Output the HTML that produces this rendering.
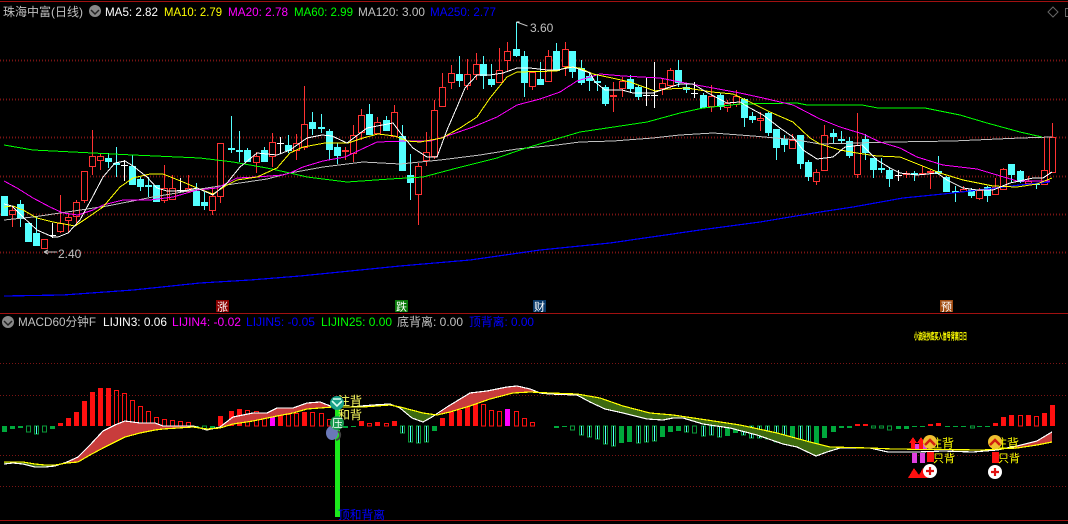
<!DOCTYPE html>
<html><head><meta charset="utf-8"><title>珠海中富</title>
<style>html,body{margin:0;padding:0;background:#000;width:1068px;height:524px;overflow:hidden}svg{display:block}text{font-family:"Liberation Sans","Noto Sans CJK SC",sans-serif;font-size:12px}</style></head>
<body>
<svg width="1068" height="524" viewBox="0 0 1068 524" xmlns="http://www.w3.org/2000/svg">
<rect width="1068" height="524" fill="#000"/>
<g shape-rendering="crispEdges">
<path d="M0 1.5H1068M0 313.5H1068M0 520.5H1068" stroke="#a01010" stroke-width="1" fill="none"/>
<path d="M0 60.5H1068M0 99.5H1068M0 137.5H1068M0 176.5H1068M0 214.5H1068M0 252.5H1068" stroke="#3a0a0a" stroke-width="3" stroke-dasharray="1 2" fill="none"/>
<path d="M0 60.5H1068M0 99.5H1068M0 137.5H1068M0 176.5H1068M0 214.5H1068M0 252.5H1068M0 363.5H1068M0 395.5H1068M0 455.5H1068M0 486.5H1068" stroke="#7a1414" stroke-width="1" stroke-dasharray="1 2" fill="none"/>
<!-- cyan wicks -->
<path fill="none" stroke="#54ffff" d="M20.5 200V227M36.5 217V246M108.5 153V168M116.5 147V177M132.5 155V185M140.5 177V191M148.5 177V197M196.5 183V206M204.5 192V210M231.5 116V153M239.5 131V162M247.5 148V162M264.5 147V162M288.5 135V153M312.5 112V135M321.5 114V133M329.5 129V160M337.5 143V164M369.5 104V135M386.5 116V131M402.5 125V171M410.5 154V200M459.5 56V87M483.5 56V89M491.5 64V87M516.5 22V57M524.5 51V97M540.5 62V85M556.5 43V71M572.5 51V78M581.5 60V85M589.5 72V91M597.5 74V91M605.5 85V106M630.5 75V93M638.5 85V100M678.5 60V87M686.5 83V93M703.5 93V108M720.5 93V110M744.5 98V127M752.5 112V123M768.5 112V136M776.5 129V160M784.5 135V152M800.5 135V169M808.5 160V181M833.5 129V143M841.5 131V143M849.5 137V158M865.5 134V160M873.5 158V178M881.5 158V173M889.5 167V187M914.5 171V181M938.5 156V174M946.5 176V192M955.5 186V202M971.5 188V198M987.5 186V202M1011.5 164V183M1020.5 170V183M1036.5 183V189"/>
<!-- red wicks -->
<path fill="none" stroke="#ff3232" d="M12.5 206V227M60.5 195V233M68.5 213V232M76.5 200V224M84.5 171V203M92.5 130V175M100.5 153V170M164.5 165V203M172.5 175V200M188.5 175V192M212.5 187V215M220.5 143V203M256.5 152V173M272.5 133V167M296.5 134V160M304.5 86V150M345.5 147V160M353.5 125V162M361.5 109V140M377.5 117V134M394.5 105V137M418.5 163V225M426.5 132V166M434.5 100V159M442.5 73V107M451.5 65V89M467.5 59V90M476.5 53V80M499.5 48V83M507.5 42V72M532.5 72V90M548.5 50V82M565.5 42V76M613.5 82V112M622.5 77V97M662.5 79V95M670.5 68V88M711.5 85V112M727.5 100V112M736.5 90V107M760.5 112V131M792.5 134V149M816.5 169V185M824.5 125V171M857.5 113V178M906.5 171V178M922.5 166V175M930.5 170V189M963.5 186V192M979.5 188V200M995.5 178V195M1003.5 168V190M1028.5 176V184M1044.5 137V185M1052.5 123V173"/>
<!-- red bodies -->
<path fill="#000" stroke="#ff3232" d="M9.5 210.5h6v4h-6zM41.5 239.5h6v9h-6zM57.5 223.5h6v8h-6zM65.5 217.5h6v3h-6zM73.5 202.5h6v14h-6zM81.5 171.5h6v29h-6zM89.5 156.5h6v10h-6zM97.5 156.5h6v4h-6zM161.5 188.5h6v12h-6zM169.5 188.5h6v11h-6zM185.5 188.5h6v3h-6zM209.5 196.5h6v14h-6zM217.5 143.5h6v53h-6zM253.5 156.5h6v6h-6zM269.5 142.5h6v14h-6zM293.5 143.5h6v7h-6zM301.5 124.5h6v23h-6zM342.5 150.5h6v1h-6zM350.5 135.5h6v18h-6zM358.5 115.5h6v17h-6zM374.5 122.5h6v11h-6zM391.5 112.5h6v24h-6zM415.5 166.5h6v28h-6zM423.5 152.5h6v8h-6zM431.5 110.5h6v46h-6zM439.5 87.5h6v19h-6zM448.5 73.5h6v9h-6zM464.5 74.5h6v11h-6zM473.5 64.5h6v10h-6zM496.5 70.5h6v12h-6zM504.5 51.5h6v9h-6zM529.5 72.5h6v14h-6zM545.5 56.5h6v25h-6zM562.5 49.5h6v17h-6zM610.5 95.5h6v1h-6zM619.5 81.5h6v7h-6zM659.5 83.5h6v5h-6zM667.5 70.5h6v15h-6zM708.5 96.5h6v10h-6zM724.5 103.5h6v4h-6zM733.5 96.5h6v8h-6zM757.5 118.5h6v2h-6zM789.5 140.5h6v8h-6zM813.5 172.5h6v9h-6zM821.5 135.5h6v35h-6zM854.5 145.5h6v29h-6zM903.5 173.5h6v1h-6zM919.5 173.5h6v1h-6zM927.5 171.5h6v1h-6zM960.5 189.5h6v2h-6zM976.5 190.5h6v8h-6zM992.5 187.5h6v7h-6zM1000.5 169.5h6v20h-6zM1025.5 181.5h6v2h-6zM1041.5 170.5h6v14h-6zM1049.5 137.5h6v35h-6z"/>
<!-- cyan bodies -->
<path fill="#54ffff" d="M1 196h7v20h-7zM17 204h7v15h-7zM25 223h7v19h-7zM33 233h7v13h-7zM105 158h7v4h-7zM113 163h7v2h-7zM129 166h7v19h-7zM137 179h7v8h-7zM145 185h7v2h-7zM153 185h7v17h-7zM193 191h7v15h-7zM201 202h7v4h-7zM228 148h7v2h-7zM236 150h7v2h-7zM244 150h7v12h-7zM261 150h7v12h-7zM285 145h7v6h-7zM309 122h7v7h-7zM318 127h7v2h-7zM326 131h7v19h-7zM334 147h7v9h-7zM366 114h7v21h-7zM383 120h7v11h-7zM399 136h7v35h-7zM407 175h7v8h-7zM456 74h7v7h-7zM480 64h7v12h-7zM488 79h7v6h-7zM513 49h7v7h-7zM521 56h7v27h-7zM537 79h7v6h-7zM553 51h7v20h-7zM569 51h7v21h-7zM578 68h7v15h-7zM586 76h7v5h-7zM594 81h7v2h-7zM602 87h7v17h-7zM627 79h7v10h-7zM635 87h7v10h-7zM675 70h7v13h-7zM683 87h7v3h-7zM700 95h7v13h-7zM717 95h7v12h-7zM741 99h7v19h-7zM749 116h7v4h-7zM765 113h7v20h-7zM773 129h7v19h-7zM781 139h7v6h-7zM797 135h7v29h-7zM805 162h7v15h-7zM830 133h7v4h-7zM838 139h7v2h-7zM846 141h7v15h-7zM862 139h7v14h-7zM870 158h7v12h-7zM878 168h7v2h-7zM886 170h7v9h-7zM911 173h7v2h-7zM935 171h7v3h-7zM943 177h7v15h-7zM952 191h7v2h-7zM968 190h7v6h-7zM984 187h7v9h-7zM1008 164h7v11h-7zM1017 171h7v11h-7zM1033 184h7v1h-7z"/>
<!-- white crosses -->
<path fill="none" stroke="#fff" d="M52.5 223V238M49 235.5h7M124.5 160V181M121 165.5h7M180.5 178V193M177 190.5h7M280.5 137V153M277 143.5h7M646.5 78V106M643 95.5h7M654.5 62V108M651 95.5h7M694.5 82V98M691 93.5h7M898.5 170V181M895 175.5h7"/>
<!-- MA lines -->
<g fill="none">
<polyline stroke="#0000ff" stroke-width="1.2" points="4,296 63,295 133,290 200,283 250,280 300,276 400,266 470,260 540,250 610,243 700,230 760,222 820,212 853,207 903,198 953,193 987,189 1020,185 1050,182"/>
<polyline stroke="#c0c0c0" stroke-width="1" points="4,220 33,217 67,212 107,206 153,197 200,189 233,184 267,179 290,173 323,167 363,162 400,164 440,160 480,155 517,149 557,145 580,142 613,141 653,138 680,135 713,133 753,136 797,140 820,144 893,142 953,141 1020,138 1052,137"/>
<polyline stroke="#00ff00" stroke-width="1" points="4,145 33,150 73,152 133,155 200,158 233,162 267,168 290,173 307,177 347,182 390,179 423,177 457,168 497,158 523,149 563,137 580,132 607,128 647,122 680,113 703,108 740,104 797,103 807,105 862,105 878,108 925,108 960,115 987,123 1020,132 1042,137"/>
<polyline stroke="#ff00ff" stroke-width="1" points="4,181 17,188 33,198 50,207 63,213 78,215 93,210 103,205 123,200 150,200 173,197 197,190 217,188 237,178 257,177 283,175 290,173 303,167 323,161 345,157 377,142 407,141 430,141 447,136 473,127 497,117 517,105 540,99 560,92 577,81 600,74 623,76 660,78 680,82 713,88 740,93 763,98 793,105 820,119 840,127 863,134 880,142 900,148 917,157 943,165 977,169 997,175 1017,181 1050,181"/>
<polyline stroke="#ffff00" stroke-width="1" points="4,207 13,206 23,210 37,218 53,222 75,226 87,218 103,207 120,187 133,178 150,174 163,174 183,182 197,188 213,194 227,185 237,180 257,177 277,168 290,153 303,147 325,143 348,143 363,138 378,134 395,136 407,141 420,142 442,138 460,128 477,117 490,98 507,77 517,72 557,71 567,67 580,68 593,74 612,78 630,82 655,91 667,89 687,88 712,92 733,94 750,102 770,112 793,122 810,138 820,144 840,150 857,153 877,156 900,157 920,165 940,173 963,180 993,186 1017,187 1037,184 1052,178"/>
<polyline stroke="#ffffff" stroke-width="1" points="4,204 12,206 23,217 37,230 53,237 58,237 68,233 80,220 92,198 103,177 115,163 125,161 133,166 147,177 157,188 167,191 183,191 197,188 213,195 227,183 240,167 257,153 277,155 290,150 307,138 322,135 332,136 347,143 367,128 393,123 402,135 413,148 427,157 437,157 447,130 457,107 465,88 477,75 490,75 503,73 517,68 530,68 547,70 557,70 573,67 590,73 595,82 605,90 622,90 633,93 653,93 667,88 680,84 693,84 708,93 727,103 740,102 750,108 763,115 780,128 793,137 803,150 817,159 833,157 845,147 862,145 877,160 890,168 900,173 917,175 937,173 947,180 963,188 977,190 993,190 1010,183 1033,178 1043,178 1052,172"/>
</g>
<!-- MACD histogram -->
<path fill="#ff1010" d="M58 423h5v3h-5zM66 418h5v8h-5zM74 412h5v14h-5zM82 401h5v25h-5zM90 392h5v34h-5zM98 388h5v38h-5zM106 388h5v38h-5zM218 416h5v10h-5zM229 411h5v15h-5zM237 409h5v17h-5zM278 415h5v11h-5zM302 412h5v14h-5zM359 421h5v5h-5zM375 422h5v4h-5zM392 421h5v5h-5zM440 418h5v8h-5zM449 412h5v14h-5zM457 410h5v16h-5zM465 406h5v20h-5zM473 404h5v22h-5zM855 424h5v2h-5zM863 424h5v2h-5zM928 424h5v2h-5zM936 423h5v3h-5zM993 423h5v3h-5zM1001 417h5v9h-5zM1009 415h5v11h-5zM1026 415h5v11h-5zM1042 413h5v13h-5zM1050 405h5v21h-5z"/>
<path fill="none" stroke="#ff1010" d="M114.500 390.500h4V426h-4zM122.500 393.500h4V426h-4zM130.500 400.500h4V426h-4zM138.500 406.500h4V426h-4zM146.500 411.500h4V426h-4zM154.500 417.500h4V426h-4zM162.500 419.500h4V426h-4zM170.500 420.500h4V426h-4zM178.500 421.500h4V426h-4zM186.500 422.500h4V426h-4zM245.500 410.500h4V426h-4zM254.500 411.500h4V426h-4zM262.500 417.500h4V426h-4zM286.500 414.500h4V426h-4zM294.500 413.500h4V426h-4zM310.500 412.500h4V426h-4zM319.500 413.500h4V426h-4zM327.500 419.500h4V426h-4zM367.500 423.500h4V426h-4zM384.500 423.500h4V426h-4zM481.500 404.500h4V426h-4zM489.500 410.500h4V426h-4zM497.500 411.500h4V426h-4zM514.500 411.500h4V426h-4zM522.500 418.500h4V426h-4zM530.500 422.500h4V426h-4zM1018.500 415.500h4V426h-4zM1034.500 416.500h4V426h-4z"/>
<path fill="#ff00ff" d="M270 411h5v15h-5zM505 409h5v17h-5z"/>
<path fill="#00a83c" d="M2 426h5v6h-5zM10 426h5v3h-5zM18 426h5v2h-5zM50 426h5v3h-5zM194 426h5v1h-5zM210 426h5v2h-5zM343 426h5v2h-5zM351 426h5v1h-5zM432 426h5v5h-5zM554 426h5v2h-5zM562 426h5v1h-5zM619 426h5v17h-5zM627 426h5v16h-5zM660 426h5v11h-5zM668 426h5v6h-5zM676 426h5v5h-5zM725 426h5v10h-5zM733 426h5v7h-5zM790 426h5v14h-5zM814 426h5v20h-5zM822 426h5v12h-5zM831 426h5v6h-5zM839 426h5v2h-5zM847 426h5v2h-5zM896 426h5v3h-5zM904 426h5v3h-5zM912 426h5v1h-5zM920 426h5v1h-5zM945 426h5v1h-5zM953 426h5v1h-5zM961 426h5v1h-5zM977 426h5v1h-5zM985 426h5v1h-5z"/>
<path fill="none" stroke="#0a9a3a" d="M26.500 426v6h4v-6zM34.500 426v8h4v-8zM42.500 426v6h4v-6zM202.500 426v3h4v-3zM400.500 426v7h4v-7zM408.500 426v16h4v-16zM416.500 426v17h4v-17zM424.500 426v16h4v-16zM570.500 426v4h4v-4zM579.500 426v9h4v-9zM587.500 426v11h4v-11zM595.500 426v13h4v-13zM603.500 426v18h4v-18zM611.500 426v20h4v-20zM636.500 426v17h4v-17zM644.500 426v16h4v-16zM652.500 426v15h4v-15zM684.500 426v6h4v-6zM692.500 426v7h4v-7zM701.500 426v10h4v-10zM709.500 426v9h4v-9zM717.500 426v11h4v-11zM741.500 426v9h4v-9zM749.500 426v12h4v-12zM757.500 426v12h4v-12zM765.500 426v13h4v-13zM774.500 426v16h4v-16zM782.500 426v17h4v-17zM798.500 426v17h4v-17zM806.500 426v19h4v-19zM871.500 426v2h4v-2zM879.500 426v2h4v-2zM887.500 426v4h4v-4zM970.500 426v2h4v-2z"/>
<path fill="none" stroke="#54ffff" d="M36.500 426v8M402.500 426v7M410.500 426v16M418.500 426v17M426.500 426v16M581.500 426v9M589.500 426v11M597.500 426v13M605.500 426v18M613.500 426v20M638.500 426v17M646.500 426v16M654.500 426v15M686.500 426v6M703.500 426v10M711.500 426v9M719.500 426v11M743.500 426v9M751.500 426v12M759.500 426v12M767.500 426v13M776.500 426v16M784.500 426v17M800.500 426v17M808.500 426v19"/>
</g>
<!-- MACD fills -->
<g shape-rendering="crispEdges">
<polygon fill="#c83c3c" points="55,466 67,462 78,457 90,445 103,431 115,425 125,421 140,423 155,423 163,426 193,426 193,427 163,429 155,430 140,433 125,437 115,442 103,448 90,455 78,462 67,463"/>
<polygon fill="#c83c3c" points="220,427 233,417 253,413 267,413 277,408 293,408 307,403 320,402 333,407 350,407 373,405 390,404 390,405 363,407 333,407 307,409 290,413 277,416 253,421 233,424"/>
<polygon fill="#c83c3c" points="437,415 447,407 470,393 487,391 507,387 517,386 530,389 540,393 530,392 513,393 490,399 470,406 450,412"/>
<polygon fill="#c83c3c" points="997,449 1017,446 1037,441 1052,432 1052,442 1037,445 1017,448"/>
<polygon fill="#3e6a10" points="400,407 412,418 423,422 432,417 437,415 423,413"/>
<polygon fill="#3e6a10" points="577,394 600,398 623,406 650,413 673,415 707,420 740,425 777,433 810,442 830,447 840,448 827,452 816,456 797,447 783,444 757,435 730,428 703,424 683,418 673,418 663,420 647,419 623,413 605,409 590,402 577,395"/>
<polygon fill="#3e6a10" points="4,462 23,462 35,464 45,465 55,466 45,467 35,467 23,464 13,463 4,464"/>
<polygon fill="#3e6a10" points="193,426 207,430 220,427 220,428 207,429"/>
<polyline fill="none" stroke="#ffffff" stroke-width="1.2" points="4,464 13,463 23,464 35,467 45,467 55,466 67,462 78,457 90,445 103,431 115,425 125,421 140,423 155,423 163,426 193,426 207,430 220,427 233,417 253,413 267,413 277,408 293,408 307,403 320,402 333,407 350,407 373,405 390,404 400,408 412,418 423,422 432,417 447,407 470,393 487,391 507,387 517,386 530,389 540,393 550,394 577,395 590,402 605,409 623,413 647,419 663,420 673,418 683,418 703,424 730,428 757,435 783,444 797,447 816,456 827,452 840,448 870,448 888,452 917,452 943,451 973,452 997,450 1017,446 1037,441 1052,432"/>
<polyline fill="none" stroke="#ffff00" stroke-width="1.2" points="4,462 23,462 35,464 45,465 55,465 67,463 78,462 90,455 103,448 115,442 125,437 140,433 155,430 163,429 193,427 207,429 220,428 233,424 253,421 277,416 293,413 307,409 333,407 363,407 390,405 400,407 423,413 437,415 450,412 470,406 490,399 513,393 530,392 550,393 577,394 600,398 623,406 650,413 673,415 707,420 740,425 777,433 810,442 830,447 870,448 893,449 983,450 997,449 1017,448 1037,445 1052,442"/>
<rect x="335" y="408" width="5" height="9" fill="#1ce81c"/>
<rect x="335" y="430" width="5" height="87" fill="#1ce81c"/>
<!-- right icons bars -->
<path fill="#e040e0" d="M912 453h5v10h-5zM920 453h5v10h-5zM915 444h4v5h-4zM923 444h4v5h-4z"/>
<path fill="#ff1010" d="M927 452h7v10h-7zM992 452h7v11h-7z"/>
<path fill="#ff1010" d="M913 437l4 6h-2v6h-4v-6h-2zM921 437l4 6h-2v6h-4v-6h-2zM908 478l6-10 5 7 4-7 5 10z"/>
</g>
<!-- marker text sits under the icons -->
<text x="338" y="405" fill="#ffff60" style="font-size:12px">注背</text>
<text x="338" y="419" fill="#ffff60" style="font-size:12px">和背</text>
<text x="930" y="447.500" fill="#ffff00" style="font-size:12px">注背</text>
<text x="933" y="462" fill="#ffff00" style="font-size:11px">只背</text>
<text x="995" y="447.500" fill="#ffff00" style="font-size:12px">注背</text>
<text x="998" y="462" fill="#ffff00" style="font-size:11px">只背</text>
<!-- left-center icons -->
<ellipse cx="332" cy="433" rx="6" ry="7" fill="#6a78b8"/>
<path d="M338 431a5 5 0 0 1 -2 9" fill="none" stroke="#444" stroke-width="2"/>
<circle cx="337" cy="403" r="7" fill="#18a088"/>
<path d="M332 401l5 5 5-5M333 399h8" fill="none" stroke="#d8fff0" stroke-width="1.6"/>
<circle cx="337" cy="423" r="7" fill="#1a9a50"/>
<circle cx="930" cy="442" r="7" fill="#f0c030"/><path d="M925 445l5-5 5 5" fill="none" stroke="#d02010" stroke-width="2.5"/>
<circle cx="995" cy="442" r="7" fill="#f0c030"/><path d="M990 445l5-5 5 5" fill="none" stroke="#d02010" stroke-width="2.5"/>
<circle cx="930" cy="471" r="7" fill="#fff"/><path d="M930 467v8M926 471h8" stroke="#e01010" stroke-width="2.2"/>
<circle cx="995" cy="472" r="7" fill="#fff"/><path d="M995 468v8M991 472h8" stroke="#e01010" stroke-width="2.2"/>
<!-- label markers -->
<rect x="216" y="300" width="13" height="12" fill="#8a0000"/>
<rect x="395" y="300" width="13" height="12" fill="#0a7a0a"/>
<rect x="533" y="300" width="13" height="12" fill="#0a3a6a"/>
<rect x="940" y="300" width="13" height="12" fill="#a04a10"/>
<path d="M516.500 22l11 4" stroke="#c0c0c0" fill="none"/><path d="M516.500 22h3" stroke="#fff"/>
<path d="M44 252h13M44 252l4-2M44 252l4 2" stroke="#c0c0c0" fill="none"/>
<!-- toolbar icons -->
<circle cx="95" cy="11" r="6" fill="#888"/><path d="M91 10l4 4 4-4" fill="none" stroke="#222" stroke-width="1.500"/>
<circle cx="8" cy="322" r="6" fill="#888"/><path d="M4 321l4 4 4-4" fill="none" stroke="#222" stroke-width="1.500"/>
<path d="M1053 7l5 5-5 5-5-5z" fill="none" stroke="#666"/>
<rect x="1065.500" y="8.500" width="4" height="8" fill="none" stroke="#666"/>
<!-- text -->
<text x="3" y="16" fill="#c0c0c0" textLength="80" lengthAdjust="spacingAndGlyphs">珠海中富(日线)</text>
<text x="105" y="16" fill="#ffffff" textLength="53" lengthAdjust="spacingAndGlyphs">MA5: 2.82</text>
<text x="164" y="16" fill="#ffff00" textLength="58" lengthAdjust="spacingAndGlyphs">MA10: 2.79</text>
<text x="228" y="16" fill="#ff00ff" textLength="60" lengthAdjust="spacingAndGlyphs">MA20: 2.78</text>
<text x="294" y="16" fill="#00ff00" textLength="59" lengthAdjust="spacingAndGlyphs">MA60: 2.99</text>
<text x="358" y="16" fill="#c0c0c0" textLength="67" lengthAdjust="spacingAndGlyphs">MA120: 3.00</text>
<text x="430" y="16" fill="#0000ff" textLength="66" lengthAdjust="spacingAndGlyphs">MA250: 2.77</text>
<text x="530" y="32" fill="#c0c0c0">3.60</text>
<text x="58" y="258" fill="#c0c0c0">2.40</text>
<text x="217" y="310.500" fill="#fff" style="font-size:11px">涨</text>
<text x="396" y="310.500" fill="#fff" style="font-size:11px">跌</text>
<text x="534" y="310.500" fill="#fff" style="font-size:11px">财</text>
<text x="941" y="310.500" fill="#fff" style="font-size:11px">预</text>
<text x="18" y="326" fill="#c0c0c0" textLength="78" lengthAdjust="spacingAndGlyphs">MACD60分钟F</text>
<text x="103" y="326" fill="#ffffff" textLength="64" lengthAdjust="spacingAndGlyphs">LIJIN3: 0.06</text>
<text x="172" y="326" fill="#ff00ff" textLength="69" lengthAdjust="spacingAndGlyphs">LIJIN4: -0.02</text>
<text x="246" y="326" fill="#0000ff" textLength="69" lengthAdjust="spacingAndGlyphs">LIJIN5: -0.05</text>
<text x="321" y="326" fill="#00ff00" textLength="71" lengthAdjust="spacingAndGlyphs">LIJIN25: 0.00</text>
<text x="397" y="326" fill="#c0c0c0" textLength="66" lengthAdjust="spacingAndGlyphs">底背离: 0.00</text>
<text x="469" y="326" fill="#0000ff" textLength="65" lengthAdjust="spacingAndGlyphs">顶背离: 0.00</text>
<text x="914" y="339.500" fill="#ffff00" stroke="#ffff00" stroke-width="0.4" textLength="53" lengthAdjust="spacingAndGlyphs" style="font-size:9px">小波段抄底买入信号背离日日</text>
<text x="332" y="427" fill="#fff" style="font-size:11px">压</text>
<text x="338" y="519" fill="#0000ff" textLength="47" lengthAdjust="spacingAndGlyphs">顶和背离</text>
</svg>
</body></html>
